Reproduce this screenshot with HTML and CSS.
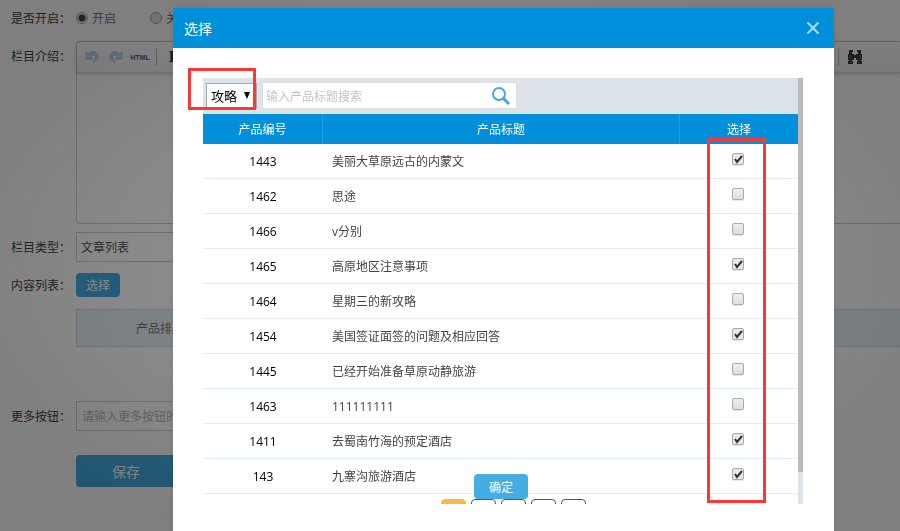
FILE: index.html
```html
<!DOCTYPE html>
<html lang="zh-CN">
<head>
    <meta charset="utf-8">
    <title>选择</title>
    <link rel="stylesheet" href="styles.css">
</head>
<body>
    <form class="page-form">
        <div class="row">
            <span class="row-label">是否开启：</span>
            <div class="field radios">
                <label><input type="radio" name="open" checked>开启</label>
                <label><input type="radio" name="open">关</label>
            </div>
        </div>
        <div class="row">
            <label class="row-label" for="intro">栏目介绍：</label>
            <div class="field editor">
                <div class="editor-bar">
                    <button type="button" class="tool" aria-label="undo">
                        <svg width="14" height="14" viewBox="0 0 14 14"><path d="M1 2v7h7L5.500 6.500C8 4.500 10.500 5 10.500 7.500c0 2-1.500 3.500-3 5C11 11.500 13 9.500 13 6.500 13 1.500 7.500 0 3.500 4z" fill="#c3d4ea" stroke="#b0c6e2"/></svg>
                    </button>
                    <button type="button" class="tool" aria-label="redo">
                        <svg width="14" height="14" viewBox="0 0 14 14"><path d="M13 2v7H6l2.500-2.500C6 4.500 3.500 5 3.500 7.500c0 2 1.500 3.500 3 5C3 11.500 1 9.500 1 6.500 1 1.500 6.500 0 10.500 4z" fill="#c3d4ea" stroke="#b0c6e2"/></svg>
                    </button>
                    <button type="button" class="tool tool-html">HTML</button>
                    <span class="sep"></span>
                    <button type="button" class="tool tool-bold">B</button>
                    <span class="sep sep-right"></span>
                    <button type="button" class="tool tool-find" aria-label="find">
                        <svg width="14" height="14" viewBox="0 0 14 14"><path d="M1 0h4v2h-1v2h2v1h2V4h2V2H9V0h4v4h1v6h-1v1h1v3H9v-3h1v-1H8V8H6v2H4v1h1v3H0v-3h1v-1H0V4h1z" fill="#3a3a3a"/><path d="M2 5v4M12 5v4M2 12h2M10 12h2" stroke="#777"/></svg>
                    </button>
                </div>
                <textarea id="intro"></textarea>
            </div>
        </div>
        <div class="row">
            <label class="row-label" for="type">栏目类型：</label>
            <div class="field">
                <select id="type" class="text-box type-box"><option>文章列表</option></select>
            </div>
        </div>
        <div class="row">
            <span class="row-label">内容列表：</span>
            <div class="field content-list">
                <button type="button" class="btn btn-small">选择</button>
                <table class="sort-table">
                    <tr><th class="sort-col">产品排序</th><th></th></tr>
                </table>
            </div>
        </div>
        <div class="row">
            <label class="row-label" for="more">更多按钮：</label>
            <div class="field">
                <input type="text" id="more" class="text-box" placeholder="请输入更多按钮的链接">
            </div>
        </div>
        <button type="button" class="btn btn-save">保存</button>
    </form>

    <div class="mask">
        <div class="dialog">
            <div class="dialog-head">
                <span>选择</span>
                <button type="button" class="close" aria-label="close">
                    <svg width="12" height="12" viewBox="0 0 12 12"><path d="M1 1l10 10M11 1L1 11" stroke="#a8dbf8" stroke-width="2" stroke-linecap="round"/></svg>
                </button>
            </div>
            <div class="dialog-body">
                <div class="list-scroll">
                    <div class="list">
                        <div class="search-bar">
                            <select class="kind" aria-label="类型"><option>攻略</option></select>
                            <div class="search-box">
                                <input type="text" placeholder="输入产品标题搜索" aria-label="搜索">
                                <button type="button" aria-label="搜索">
                                    <svg width="20" height="20" viewBox="0 0 20 20"><circle cx="8" cy="8" r="6" fill="none" stroke="#4aa5e0" stroke-width="2"/><path d="M12 12l6 6" stroke="#4aa5e0" stroke-width="3"/></svg>
                                </button>
                            </div>
                        </div>
                        <table class="products">
                            <thead>
                                <tr><th class="col-id">产品编号</th><th>产品标题</th><th class="col-check">选择</th></tr>
                            </thead>
                            <tbody>
                                <tr><td>1443</td><td>美丽大草原远古的内蒙文</td><td><input type="checkbox" aria-label="1443" checked></td></tr>
                                <tr><td>1462</td><td>思途</td><td><input type="checkbox" aria-label="1462"></td></tr>
                                <tr><td>1466</td><td>v分别</td><td><input type="checkbox" aria-label="1466"></td></tr>
                                <tr><td>1465</td><td>高原地区注意事项</td><td><input type="checkbox" aria-label="1465" checked></td></tr>
                                <tr><td>1464</td><td>星期三的新攻略</td><td><input type="checkbox" aria-label="1464"></td></tr>
                                <tr><td>1454</td><td>美国签证面签的问题及相应回答</td><td><input type="checkbox" aria-label="1454" checked></td></tr>
                                <tr><td>1445</td><td>已经开始准备草原动静旅游</td><td><input type="checkbox" aria-label="1445"></td></tr>
                                <tr><td>1463</td><td>111111111</td><td><input type="checkbox" aria-label="1463"></td></tr>
                                <tr><td>1411</td><td>去蜀南竹海的预定酒店</td><td><input type="checkbox" aria-label="1411" checked></td></tr>
                                <tr><td>143</td><td>九寨沟旅游酒店</td><td><input type="checkbox" aria-label="143" checked></td></tr>
                            </tbody>
                        </table>
                        <div class="pager">
                            <button type="button" class="current"></button>
                            <button type="button"></button>
                            <button type="button"></button>
                            <button type="button"></button>
                            <button type="button"></button>
                        </div>
                    </div>
                    <div class="scrollbar"><div class="thumb"></div></div>
                    <button type="button" class="btn btn-ok">确定</button>
                </div>
                <div class="mark mark-kind"></div>
                <div class="mark mark-check"></div>
            </div>
        </div>
    </div>
</body>
</html>
```

FILE: styles.css
```css
* {
    box-sizing: border-box;
}
body {
    margin: 0;
    background-color: #fff;
    color: #333;
}
body, button, input, select, textarea {
    font-family: "Open Sans", "Noto Sans CJK SC", sans-serif;
    font-size: 12px;
}
button {
    padding: 0;
    border: none;
    background: none;
    cursor: pointer;
}

/* form behind the dialog */
.page-form {
    display: flex;
    flex-direction: column;
    gap: 8px;
    padding-top: 3px;
}
.row {
    display: flex;
}
.row-label {
    width: 76px;
    padding: 1px 0 0 11px;
    line-height: 29px;
    color: #444;
    white-space: nowrap;
}
.field {
    flex: 1;
    min-width: 0;
}
.radios {
    display: flex;
    gap: 34px;
    color: #777;
}
.radios label {
    display: flex;
    align-items: center;
    gap: 4px;
}
input[type=radio] {
    appearance: none;
    width: 12px;
    height: 12px;
    margin: 0;
    border: 1px solid #aaa;
    border-radius: 50%;
    background-color: #e6e6e6;
}
input[type=radio]:checked {
    background: radial-gradient(circle, #444 3px, #e6e6e6 4px);
}
.editor {
    height: 183px;
    display: flex;
    flex-direction: column;
    border: 1px solid #ccc;
    border-right: none;
    border-radius: 4px 0 0 4px;
}
.editor-bar {
    display: flex;
    align-items: center;
    height: 31px;
    padding: 0 33px 0 3px;
    border-bottom: 1px solid #d8d8d8;
    border-radius: 4px 0 0 0;
    background: linear-gradient(#fff, #f2f2f2);
    box-shadow: 0 1px 4px rgba(0, 0, 0, 0.2);
}
.tool {
    display: flex;
    align-items: center;
    justify-content: center;
    width: 24px;
    height: 24px;
}
.tool-html {
    color: #3b5f9a;
    font-family: "Liberation Sans", sans-serif;
    font-size: 7px;
    font-weight: bold;
}
.tool-bold {
    color: #333;
    font-family: "Liberation Serif", serif;
    font-size: 16px;
    font-weight: bold;
}
.sep {
    width: 1px;
    height: 18px;
    margin: 0 5px 0 4px;
    background-color: #bbb;
}
.sep-right {
    margin-left: auto;
    margin-right: 4px;
}
.editor textarea {
    flex: 1;
    border: none;
    background: none;
    resize: none;
}
.text-box {
    display: block;
    width: 100%;
    max-width: 300px;
    height: 30px;
    padding: 0 5px;
    border: 1px solid #ccc;
    background-color: #fff;
    color: #555;
}
.type-box {
    appearance: none;
    padding: 1px 4px 0;
}
.text-box::placeholder {
    color: #bbb;
}
.content-list {
    padding: 3px 0 46px;
}
.btn {
    border-radius: 4px;
    background-color: #43ade4;
    color: #fff;
}
.btn-small {
    display: block;
    width: 44px;
    height: 24px;
}
.sort-table {
    width: 100%;
    height: 38px;
    margin-top: 12px;
    border: 1px solid #c9dce6;
    border-right: none;
    border-spacing: 0;
    background-color: #e6f2fa;
}
.sort-table th {
    color: #777;
    font-weight: normal;
}
.sort-col {
    width: 166px;
}
.btn-save {
    width: 100px;
    height: 32px;
    margin: 16px 0 0 76px;
    font-size: 14px;
}

/* dialog */
.mask {
    position: fixed;
    inset: 0;
    display: flex;
    padding: 8px 66px 0 173px;
    background: radial-gradient(ellipse at center, rgba(0, 0, 0, 0.4), rgba(0, 0, 0, 0.5) 80%);
}
.dialog {
    flex: 1;
    display: flex;
    flex-direction: column;
    background-color: #fff;
    box-shadow: 0 0 8px rgba(0, 0, 0, 0.1);
}
.dialog-head {
    display: flex;
    align-items: center;
    justify-content: space-between;
    height: 40px;
    padding: 0 15px 0 11px;
    background-color: #008fdb;
    color: #fff;
    font-size: 14px;
}
.close {
    display: flex;
}
.dialog-body {
    position: relative;
    padding: 30px 31px 0 30px;
}
.list-scroll {
    position: relative;
    display: flex;
    height: 426px;
    overflow: hidden;
}
.list {
    flex: 1;
}
.scrollbar {
    width: 5px;
    background-color: #dce3eb;
}
.thumb {
    height: 394px;
    background-color: #bbb;
}
.search-bar {
    display: flex;
    align-items: center;
    gap: 5px;
    height: 36px;
    padding: 0 0 1px 3px;
    background-color: #dce3ea;
}
.kind {
    appearance: none;
    width: 51px;
    height: 26px;
    padding: 0 0 0 4px;
    border: 1px solid #a9a9a9;
    background: #fff url("data:image/svg+xml,%3Csvg xmlns='http://www.w3.org/2000/svg' width='6' height='7'%3E%3Cpath d='M0 0h6L3 7z'/%3E%3C/svg%3E") no-repeat right 6px top 8px;
    color: #000;
    font-size: 13px;
}
.search-box {
    display: flex;
    align-items: center;
    width: 255px;
    height: 27px;
    padding-right: 5px;
    border: 1px solid #ddd;
    background-color: #fff;
}
.search-box input {
    flex: 1;
    min-width: 0;
    padding: 2px 3px 0;
    border: none;
    outline: none;
}
.search-box input::placeholder {
    color: #c4c4c4;
}
.search-box button {
    display: flex;
}
.products {
    width: 100%;
    table-layout: fixed;
    border-spacing: 0;
}
.products th {
    height: 30px;
    padding: 0;
    border-right: 1px solid #1ba1e8;
    background-color: #008fdb;
    color: #fff;
    font-weight: normal;
}
.products th:last-child {
    border-right: none;
}
.col-id {
    width: 120px;
}
.col-check {
    width: 118px;
}
.products td {
    height: 35px;
    padding: 2px 0 0;
    border-bottom: 1px solid #e0eef9;
    line-height: 16px;
    text-align: center;
    color: #000;
}
.products td:nth-child(2) {
    padding-left: 9px;
    text-align: left;
    color: #444;
}
.products td:last-child {
    padding: 0 2px 0 0;
}
input[type=checkbox] {
    appearance: none;
    display: block;
    width: 12px;
    height: 12px;
    margin: 0 auto 4px;
    border: 1px solid #aaa;
    border-radius: 2px;
    background: linear-gradient(#eee, #ddd);
    box-shadow: 0 1px 1px rgba(0, 0, 0, 0.1);
}
input[type=checkbox]:checked {
    background: #e8e8e8 url("data:image/svg+xml,%3Csvg xmlns='http://www.w3.org/2000/svg' width='10' height='10'%3E%3Cpath d='M2 5l2 3 5-6' fill='none' stroke='%23333' stroke-width='2'/%3E%3C/svg%3E") no-repeat center;
}
.pager {
    display: flex;
    gap: 5px;
    padding: 5px 0 0 238px;
}
.pager button {
    width: 25px;
    height: 25px;
    border: 1px solid #4d5571;
    border-radius: 4px;
}
.pager .current {
    border-color: #fbb84c;
    background-color: #fbb84c;
}
.btn-ok {
    position: absolute;
    bottom: 5px;
    left: 271px;
    width: 54px;
    height: 25px;
}

/* red highlight frames */
.mark {
    position: absolute;
    border: 3px solid #fb3838;
    pointer-events: none;
}
.mark-kind {
    top: 20px;
    left: 15px;
    width: 68px;
    height: 42px;
}
.mark-check {
    top: 90px;
    right: 68px;
    width: 59px;
    height: 365px;
}
```
